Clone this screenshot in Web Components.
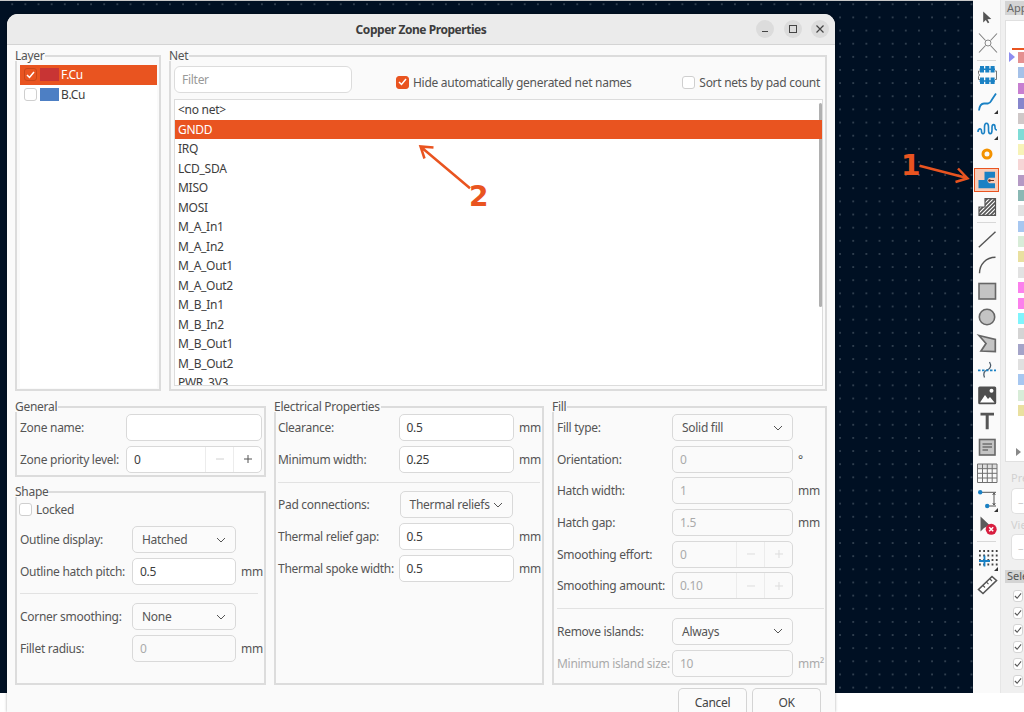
<!DOCTYPE html>
<html>
<head>
<meta charset="utf-8">
<title>Copper Zone Properties</title>
<style>
  html, body { margin: 0; height: 100%; overflow: hidden; background: #fff; }
  body { font: 12px "Noto Sans", sans-serif; letter-spacing: -0.28px; color: #3d3d3d; }
</style>
</head>
<body>
<pcb-editor>
  <tool-bar slot="tools"></tool-bar>
  <side-panel slot="panel"></side-panel>
  <zone-dialog slot="dialog"></zone-dialog>
  <call-out slot="dialog" num="1" nx="901" ny="149" d="M919.500 165.700L967 178M958 168.500L967.500 178.300L955.500 182"></call-out>
  <call-out slot="dialog" num="2" nx="469" ny="180" d="M470 188.300L421 147M433.500 147.500L420.500 146.500L424.500 158.500"></call-out>
</pcb-editor>

<script>
// small helper, every component goes through this
function shadow(el, html) {
  el.attachShadow({ mode: 'open' }).innerHTML = html;
}

const FIELD_CSS = `
  :host { display: block; }
  * { box-sizing: border-box; }
`;

class PcbEditor extends HTMLElement {
  constructor() {
    super();
    shadow(this, `
      <style>
        :host { display: block; position: relative; width: 1024px; height: 712px; overflow: hidden; background: #fff; }
        .top { display: flex; height: 693px; }
        .canvas {
          flex: 1;
          border-top: 1px solid #c8c8c8;
          background-color: #001023;
          background-image: radial-gradient(circle, #586673 0.5px, transparent 0.85px);
          background-size: 13.15px 13.15px;
          background-position: 5.67px -3.3px;
        }
      </style>
      <div class="top">
        <div class="canvas"></div>
        <slot name="tools"></slot>
        <slot name="panel"></slot>
      </div>
      <slot name="dialog"></slot>
    `);
  }
}

class ToolBar extends HTMLElement {
  constructor() {
    super();
    const blue = '#1a81c4';
    // mark = distance of the small corner triangle from the row bottom
    const icon = (size, body, mark) => `<div class="t" style="height:${size}px"><svg width="24" height="24" viewBox="0 0 24 24">${body}</svg>${mark !== undefined ? `<i style="bottom:${mark}px"></i>` : ''}</div>`;
    const zone = 'M4 20.300V12H10V3.700H20.500V20.300Z';
    shadow(this, `
      <style>
        :host { display: block; width: 28px; background: #fafafa; border-right: 1px solid #e6e6e6; padding-top: 3px; box-sizing: border-box; flex: none; }
        .t { position: relative; display: flex; align-items: center; justify-content: center; width: 27px; }
        .t svg { display: block; flex: none; }
        .t i { position: absolute; right: 2px; border: 2.5px solid transparent; border-right-color: #333; border-bottom-color: #333; }
        .sep { height: 1px; background: #d8d8d8; margin: 0 4px; }
        .on { background: #f9cdb9; box-shadow: inset 0 0 0 1px #e95420; width: 25px; margin-left: 1px; }
      </style>
      ${icon(26, `<path d="M8.200 7.500V18.500L10.800 16L12.800 19.300L14.300 18.400L12.500 15.200L16.300 15Z" fill="#555"/>`)}
      ${icon(28, `<path d="M4 2.500L10.500 9.500M22 2.500L15.500 9.500M4 21.500L10.500 14.500M22 21.500L15.500 14.500" stroke="#808080" stroke-width="1.100" fill="none"/><circle cx="13" cy="12" r="3" fill="none" stroke="#888"/>`)}
      <div class="sep" style="margin-top:3px"></div>
      ${icon(28, `<path d="M5 8H3.500V10.500L4.500 12L3.500 13.500V16.500H5M20 8H21.500V16.500H20" fill="none" stroke="#777"/><path d="M4.500 6.200H20M4.500 18H20" stroke="${blue}" stroke-width="1.500"/><path d="M5 3h4v6.500H5zM10.300 3h4v6.500h-4zM15.600 3h4v6.500h-4zM5 14.500h4V21H5zM10.300 14.500h4V21h-4zM15.600 14.500h4V21h-4z" fill="${blue}"/>`)}
      ${icon(28, `<path d="M4 19.500C4.500 15 6 12.500 9 12.500H13C15.500 12.500 16 10 17 8.500L21 2.500" fill="none" stroke="${blue}" stroke-width="1.800"/>`, 3)}
      ${icon(23, `<path d="M3 15C3 11 6.500 11 6.500 14C6.500 17.500 9.500 18 9.500 14V10C9.500 5 13.500 5 13.500 10V13C13.500 18 17 18 17 13V10.500C17 6.500 20 7 20 10C20 13 21 13 22 13" fill="none" stroke="${blue}" stroke-width="1.600"/>`, 0)}
      ${icon(28, `<circle cx="12" cy="12" r="4" fill="none" stroke="#f39200" stroke-width="3"/>`)}
      <div class="t on" style="height:24px"><svg width="25" height="24" viewBox="0 0 25 24"><path d="M4.500 20.300V12H10.500V3.700H21V20.300Z" fill="${blue}"/><path d="M21 9.800H15.500a2.800 2.800 0 0 0 0 5.400H21Z" fill="#f9cdb9"/><circle cx="15.500" cy="12.500" r="1.300" fill="#6b3020"/><path d="M15.500 12.500H20" stroke="#6b3020"/></svg></div>
      <div class="t" style="height:30px"><svg width="24" height="24" viewBox="0 0 24 24"><defs><clipPath id="hz"><path d="${zone}"/></clipPath></defs><path d="${zone}" fill="#fff"/><g clip-path="url(#hz)" stroke="#555" stroke-width="1.700"><path d="M0 8L8 0M0 12L12 0M0 16L16 0M0 20L20 0M0 24L24 0M4 24L24 4M8 24L24 8M12 24L24 12M16 24L24 16"/></g><path d="${zone}" fill="none" stroke="#555" stroke-width="1.200"/></svg></div>
      <div class="sep" style="margin-bottom:3px"></div>
      ${icon(26, `<path d="M3.800 20.300L20.500 4.700" stroke="#555" stroke-width="1.400"/>`)}
      ${icon(26, `<path d="M4.500 20.300C4.500 11 11 4.500 20.500 4.300" fill="none" stroke="#555" stroke-width="1.400"/>`)}
      ${icon(26, `<rect x="4" y="4.500" width="16.500" height="15.500" fill="#c4c4c4" stroke="#666" stroke-width="1.600"/>`)}
      ${icon(26, `<circle cx="12" cy="12" r="7.700" fill="#c4c4c4" stroke="#666" stroke-width="1.600"/>`)}
      ${icon(28, `<path d="M4 3.500L20.300 7.500V19.500L6 19L11 11.500Z" fill="#c4c4c4" stroke="#666" stroke-width="1.700"/>`)}
      ${icon(24, `<path d="M14.500 4C17 8 15 11 12 12C9 13 8 16 9.500 19.500" fill="none" stroke="#4a5a68" stroke-width="1.300"/><path d="M3 12.300H21" stroke="${blue}" stroke-width="1.700" stroke-dasharray="2.500 1.500"/>`)}
      ${icon(26, `<rect x="3.200" y="3.500" width="18" height="17.800" rx="1.500" fill="#4f4f4f"/><path d="M5 19.500L10 12L13 16L15 14L19.500 19.500Z" fill="#fff"/><circle cx="16.500" cy="7.800" r="2" fill="#fff"/>`)}
      ${icon(26, `<path d="M5.500 3.700H19V6.600H13.700V20.300H10.700V6.600H5.500Z" fill="#555"/>`)}
      ${icon(26, `<rect x="4.500" y="4.500" width="15.500" height="15.500" fill="#c4c4c4" stroke="#666" stroke-width="1.600"/><path d="M7.500 9H17M7.500 12H17M7.500 15H13" stroke="#444" stroke-width="1.200"/>`)}
      ${icon(26, `<rect x="2.500" y="3" width="19.500" height="4.700" fill="#ddd"/><path d="M2.500 3H22V21.500H2.500ZM2.500 7.700H22M2.500 12.300H22M2.500 17H22M7.500 3V21.500M12.300 3V21.500M17.200 3V21.500" fill="none" stroke="#707070"/>`)}
      ${icon(28, `<path d="M5 4.300H21M12 18H21M19 5V17M17.700 7L19 5L20.300 7M17.700 15L19 17L20.300 15" stroke="#555" fill="none"/><circle cx="5.200" cy="4.300" r="2.200" fill="${blue}"/><circle cx="12.200" cy="18" r="2.200" fill="${blue}"/>`, 2)}
      ${icon(24, `<path d="M5.500 2.500V17.500L9 14L11 13L15 11.500Z" fill="#5a5a5a"/><circle cx="16.200" cy="15.300" r="5.500" fill="#d81e3f"/><path d="M14.200 13.300L18.200 17.300M18.200 13.300L14.200 17.300" stroke="#fff" stroke-width="1.500"/>`)}
      <div class="sep" style="margin-top:3px"></div>
      ${icon(32, `<path d="M4 5H23M4 9.500H23M4 14H23M4 18.500H23" stroke="#444" stroke-width="1.800" stroke-dasharray="1.800 2.400" fill="none"/><path d="M9.500 9.500V20.500M4 15H15" stroke="${blue}" stroke-width="1.800"/>`, 3)}
      ${icon(20, `<path d="M3.500 17.500L17 4.500L21.500 8.500L8 21.500Z" fill="#fff" stroke="#555" stroke-width="1.600"/><path d="M8 13.500L10 15.500M11.500 10.200L13.500 12.200M15 7L17 9" stroke="#555" stroke-width="1.100"/>`)}
    `);
  }
}

class SidePanel extends HTMLElement {
  constructor() {
    super();
    const cols = ['#e49090','#a5c1e8','#c77fd0','#8686cc','#cfc8c8','#7fdcd6','#f7f3b8','#f6d6d6','#b49ac4','#8ab8b4','#e2e2e2','#a7c7f0','#d8ecd8','#e9e0a0','#e2e2e2','#fb80ec','#fb80ec','#80f4fc','#d4d4d4','#a4a4c8','#e0e0e0','#a7c7f0','#d8ecd8','#e9e0a0'];
    shadow(this, `
      <style>
        ${FIELD_CSS}
        :host { width: 23px; flex: none; background: #f0f0f0; overflow: hidden; font-size: 11px; color: #666; letter-spacing: 0; }
        .tab { background: #d4d4d4; margin: 1px 0 0 4px; height: 14px; line-height: 13px; padding-left: 2px; white-space: nowrap; }
        .layers { position: relative; height: 442px; margin: 5px 0 0 4px; background: #fff; border: 1px solid #e0e0e0; border-right: 0; overflow: hidden; }
        .line { height: 2px; width: 14px; margin: 27px 0 0 6px; background: #e95420; }
        .sw { display: flex; flex-direction: column; gap: 4.35px; margin: 2px 0 0 12px; }
        .sw b { display: block; width: 8px; height: 11px; flex: none; }
        .flag { position: absolute; left: 3px; top: 31px; border: 5px solid transparent; border-left: 6px solid #8e8ef0; border-right: 0; }
        .more { position: absolute; left: 10px; bottom: 5px; border: 4px solid transparent; border-left: 5px solid #888; border-right: 0; }
        .lbl { color: #d0d0d0; margin: 9px 0 0 10px; line-height: 14px; white-space: nowrap; }
        .box { height: 26px; margin: 3px 0 0 10px; background: #fff; border: 1px solid #e0e0e0; border-radius: 5px 0 0 5px; border-right: 0; color: #ccc; padding: 5px 0 0 6px; }
        .head { background: #d4d4d4; margin: 10px 0 0 4px; height: 13px; line-height: 12px; padding-left: 2px; white-space: nowrap; color: #555; }
        .cks { display: flex; flex-direction: column; gap: 5px; margin: 7px 0 0 12px; }
        .cks span { display: flex; align-items: center; justify-content: center; width: 10px; height: 12px; background: #fff; border: 1px solid #d4d4d4; border-radius: 3px; }
      </style>
      <div class="tab">App</div>
      <div class="layers">
        <div class="line"></div>
        <div class="flag"></div>
        <div class="sw">${cols.map(c => `<b style="background:${c}"></b>`).join('')}</div>
        <div class="more"></div>
      </div>
      <div class="lbl">Pre</div>
      <div class="box">–</div>
      <div class="lbl" style="margin-top:4px">Vie</div>
      <div class="box" style="margin-top:2px">–</div>
      <div class="head">Sele</div>
      <div class="cks">${Array(6).fill('<span><svg width="8" height="8" viewBox="0 0 9 8"><path d="M1 4l2.500 2.500L8 1" fill="none" stroke="#555" stroke-width="1.200"/></svg></span>').join('')}</div>
    `);
  }
}

class GroupBox extends HTMLElement {
  constructor() {
    super();
    shadow(this, `
      <style>
        ${FIELD_CSS}
        :host { min-width: 0; }
        fieldset { height: 100%; margin: 0; min-width: 0; padding: 0; border: 2px solid #dcdcdc; display: block; }
        legend { padding: 0 1px 0 0; margin: 0 0 0 -2px; font-size: 12px; line-height: 10px; color: #555; }
        .col { display: flex; flex-direction: column; height: 100%; padding: var(--pad, 2px 2px 0 3px); }
      </style>
      <fieldset>
        <legend>${this.getAttribute('label')}</legend>
        <div class="col"><slot></slot></div>
      </fieldset>
    `);
  }
}

class TextField extends HTMLElement {
  constructor() {
    super();
    const dis = this.hasAttribute('disabled');
    const spin = this.hasAttribute('spin');
    shadow(this, `
      <style>
        ${FIELD_CSS}
        :host { display: flex; height: 27px; background: ${dis ? '#fafafa' : '#fff'}; border: 1px solid #d9d9d9; border-radius: 5px; box-sizing: border-box; color: ${dis ? '#aaa' : '#3d3d3d'}; }
        .v { flex: 1; padding-left: 7px; line-height: 26px; min-width: 0; }
        .b { width: 28px; border-left: 1px solid #ececec; display: flex; align-items: center; justify-content: center; }
        svg { display: block; }
      </style>
      <div class="v"><slot></slot></div>
      ${spin ? `<div class="b"><svg width="10" height="10"><path d="M1 5h8" stroke="${dis ? '#ddd' : '#d0d0d0'}"/></svg></div>
      <div class="b"><svg width="10" height="10"><path d="M1 5h8M5 1v8" stroke="${dis ? '#ddd' : '#555'}"/></svg></div>` : ''}
    `);
  }
}

class SelectBox extends HTMLElement {
  constructor() {
    super();
    shadow(this, `
      <style>
        :host { display: flex; align-items: center; height: 27px; box-sizing: border-box; background: #fbfbfb; border: 1px solid #d9d9d9; border-radius: 5px; padding: 0 9px; color: #555; }
        .v { flex: 1; white-space: nowrap; }
        svg { display: block; }
      </style>
      <div class="v"><slot></slot></div>
      <svg width="10" height="6" viewBox="0 0 10 6"><path d="M1 1l4 4 4-4" fill="none" stroke="#555" stroke-width="1"/></svg>
    `);
  }
}

class CheckBox extends HTMLElement {
  constructor() {
    super();
    const on = this.hasAttribute('checked');
    shadow(this, `
      <style>
        :host { display: inline-flex; align-items: center; gap: 4px; color: #555; white-space: nowrap; }
        .b { width: 13px; height: 13px; box-sizing: border-box; border-radius: 3px; border: 1px solid ${on ? '#e95420' : '#cfcfcf'}; background: ${on ? '#e95420' : '#fff'}; display: flex; align-items: center; justify-content: center; }
        svg { display: block; }
      </style>
      <div class="b">${on ? '<svg width="9" height="8" viewBox="0 0 9 8"><path d="M1 4l2.500 2.500L8 1" fill="none" stroke="#fff" stroke-width="1.500"/></svg>' : ''}</div>
      <slot></slot>
    `);
  }
}

// one row of a property group: label, control, unit
class PropRow extends HTMLElement {
  constructor() {
    super();
    const faint = this.hasAttribute('faint');
    shadow(this, `
      <style>
        :host { display: grid; grid-template-columns: var(--lab) var(--ctl) 1fr; align-items: center; height: 27px; flex: none; margin-bottom: 4.67px; color: ${faint ? '#aaa' : '#555'}; white-space: nowrap; }
        .u { padding-left: 5px; }
      </style>
      <div><slot name="label"></slot></div>
      <slot></slot>
      <div class="u"><slot name="unit"></slot></div>
    `);
  }
}

class HLine extends HTMLElement {
  constructor() {
    super();
    shadow(this, `<style>:host { display: block; flex: none; height: 1px; background: #e2e2e2; margin: var(--hr, 4.500px 0 8.500px); }</style>`);
  }
}

class LayerList extends HTMLElement {
  constructor() {
    super();
    shadow(this, `
      <style>
        :host { display: block; flex: 1; background: #fff; }
        .r { display: flex; align-items: center; height: 19.5px; padding-left: 4px; color: #3d3d3d; }
        .r.s { background: #e95420; color: #fff; }
        .c { width: 13px; height: 13px; box-sizing: border-box; border: 1px solid #cfcfcf; background: #fff; border-radius: 3px; margin-right: 3px; display: flex; align-items: center; justify-content: center; }
        .s .c { background: #e95420; border-color: #c9471a; }
        .k { width: 19px; height: 13px; margin-right: 2px; }
        svg { display: block; }
      </style>
      <div class="r s"><div class="c"><svg width="9" height="8" viewBox="0 0 9 8"><path d="M1 4l2.500 2.500L8 1" fill="none" stroke="#fff" stroke-width="1.500"/></svg></div><div class="k" style="background:#c83434"></div>F.Cu</div>
      <div class="r"><div class="c"></div><div class="k" style="background:#4d7fc4"></div>B.Cu</div>
    `);
  }
}

class NetList extends HTMLElement {
  constructor() {
    super();
    const nets = ['<no net>','GNDD','IRQ','LCD_SDA','MISO','MOSI','M_A_In1','M_A_In2','M_A_Out1','M_A_Out2','M_B_In1','M_B_In2','M_B_Out1','M_B_Out2','PWR_3V3'];
    const esc = s => s.replace(/</g, '&lt;').replace(/>/g, '&gt;');
    shadow(this, `
      <style>
        :host { display: block; position: relative; height: 287px; width: 649px; flex: none; box-sizing: border-box; background: #fff; border: 1px solid #dcdcdc; overflow: hidden; color: #3d3d3d; }
        .r { height: 19.5px; line-height: 19px; padding-left: 3px; }
        .s { position: relative; z-index: 1; background: #e95420; color: #fff; }
        .bar { position: absolute; right: 0; top: 3px; width: 3px; height: 204px; background: #b0b0b0; border-radius: 2px; }
      </style>
      ${nets.map(n => `<div class="r${n === 'GNDD' ? ' s' : ''}">${esc(n)}</div>`).join('')}
      <div class="bar"></div>
    `);
  }
}

class DialogButton extends HTMLElement {
  constructor() {
    super();
    shadow(this, `
      <style>
        :host { display: flex; align-items: center; justify-content: center; width: 69px; height: 30px; box-sizing: border-box; background: #fbfbfb; border: 1px solid #d4d4d4; border-bottom: 0; border-radius: 5px 5px 0 0; padding-bottom: 2px; color: #444; }
      </style>
      <slot></slot>
    `);
  }
}

// the orange number + arrow drawn on top of the screenshot
class CallOut extends HTMLElement {
  constructor() {
    super();
    const x = this.getAttribute('nx'), y = this.getAttribute('ny');
    shadow(this, `
      <style>
        :host { position: absolute; left: 0; top: 0; width: 1024px; height: 712px; pointer-events: none; }
        svg { position: absolute; left: 0; top: 0; }
        span { position: absolute; font: 700 28px/34px "DejaVu Sans", sans-serif; letter-spacing: 0; color: #e95420; }
      </style>
      <svg width="1024" height="712"><path d="${this.getAttribute('d')}" fill="none" stroke="#e95420" stroke-width="2.500"/></svg>
      <span style="left:${x}px;top:${y}px">${this.getAttribute('num')}</span>
    `);
  }
}

class ZoneDialog extends HTMLElement {
  constructor() {
    super();
    shadow(this, `
      <style>
        ${FIELD_CSS}
        :host { position: absolute; left: 7px; top: 14px; width: 828px; height: 698px; background: #fafafa; border-radius: 11px 11px 0 0; overflow: hidden; font-size: 12px; color: #555; box-shadow: 0 0 3px rgba(0,0,0,.35); }
        .title { display: flex; align-items: center; justify-content: center; position: relative; height: 31px; background: #ebebeb; border-bottom: 1px solid #d4d4d4; font-weight: 700; color: #3d3d3d; letter-spacing: -0.45px; }
        .wc { position: absolute; right: 6px; top: 6px; display: flex; gap: 9.500px; }
        .wc span { width: 18px; height: 18px; border-radius: 50%; background: #dcdcdc; display: flex; align-items: center; justify-content: center; }
        .wc svg { display: block; }
        .body { padding: 6px 8px 0 8px; }
        .top { display: grid; grid-template-columns: 146px 658px; gap: 8px; height: 340px; }
        .filter-row { display: flex; align-items: center; height: 27px; flex: none; margin: 5px 0 6px 0; }
        .filter { width: 178px; height: 27px; background: #fff; border: 1px solid #dcdcdc; border-radius: 6px; color: #999; line-height: 25px; padding-left: 7px; }
        .hide { margin: 5px 0 0 44px; }
        .sort { margin: 5px 3px 0 auto; }
        .bottom { display: grid; grid-template-columns: 251px 270px 275px; gap: 8px; margin-top: 11px; height: 283px; }
        .stack { display: flex; flex-direction: column; gap: 10px; }
        .general { height: 75px; flex: none; --lab: 106px; --ctl: 136px; }
        .shape { flex: 1; --lab: 112px; --ctl: 104px; --pad: 0 6px 0 3px; --hr: 3.500px 0 9.500px; }
        .locked { height: 14px; margin: 5px 0 10px -1px; flex: none; }
        .elec { --lab: 120.500px; --ctl: 115.500px; --pad: 2px 2px 0 2px; }
        .fill { --lab: 115px; --ctl: 121px; --pad: 2px 1.500px 0 3px; }
        .actions { display: flex; justify-content: flex-end; gap: 5px; padding: 3px 6px 0 0; }
        .elec select-box { width: 113px; margin-left: 1px; }
      </style>
      <div class="title">Copper Zone Properties
        <div class="wc">
          <span><svg width="10" height="10"><path d="M2 7.500h6" stroke="#444" stroke-width="1.200"/></svg></span>
          <span><svg width="10" height="10"><rect x="1.500" y="1.500" width="7" height="7" fill="none" stroke="#444"/></svg></span>
          <span><svg width="10" height="10"><path d="M1.500 1.500l7 7M8.500 1.500l-7 7" stroke="#444" stroke-width="1.200"/></svg></span>
        </div>
      </div>
      <div class="body">
        <div class="top">
          <group-box label="Layer" style="--pad:4px 2px 1px 3px"><layer-list></layer-list></group-box>
          <group-box label="Net" style="--pad:0 2px 0 3px">
            <div class="filter-row">
              <div class="filter">Filter</div>
              <check-box class="hide" checked>Hide automatically generated net names</check-box>
              <check-box class="sort">Sort nets by pad count</check-box>
            </div>
            <net-list></net-list>
          </group-box>
        </div>
        <div class="bottom">
          <div class="stack">
            <group-box label="General" class="general">
              <prop-row><span slot="label">Zone name:</span><text-field></text-field></prop-row>
              <prop-row style="margin:0"><span slot="label">Zone priority level:</span><text-field spin>0</text-field></prop-row>
            </group-box>
            <group-box label="Shape" class="shape">
              <check-box class="locked">Locked</check-box>
              <prop-row><span slot="label">Outline display:</span><select-box>Hatched</select-box></prop-row>
              <prop-row><span slot="label">Outline hatch pitch:</span><text-field>0.5</text-field><span slot="unit">mm</span></prop-row>
              <h-line></h-line>
              <prop-row><span slot="label">Corner smoothing:</span><select-box>None</select-box></prop-row>
              <prop-row><span slot="label">Fillet radius:</span><text-field disabled>0</text-field><span slot="unit">mm</span></prop-row>
            </group-box>
          </div>
          <group-box label="Electrical Properties" class="elec">
            <prop-row><span slot="label">Clearance:</span><text-field>0.5</text-field><span slot="unit">mm</span></prop-row>
            <prop-row><span slot="label">Minimum width:</span><text-field>0.25</text-field><span slot="unit">mm</span></prop-row>
            <h-line></h-line>
            <prop-row><span slot="label">Pad connections:</span><select-box>Thermal reliefs</select-box></prop-row>
            <prop-row><span slot="label">Thermal relief gap:</span><text-field>0.5</text-field><span slot="unit">mm</span></prop-row>
            <prop-row><span slot="label">Thermal spoke width:</span><text-field>0.5</text-field><span slot="unit">mm</span></prop-row>
          </group-box>
          <group-box label="Fill" class="fill">
            <prop-row><span slot="label">Fill type:</span><select-box>Solid fill</select-box></prop-row>
            <prop-row><span slot="label">Orientation:</span><text-field disabled>0</text-field><span slot="unit">°</span></prop-row>
            <prop-row><span slot="label">Hatch width:</span><text-field disabled>1</text-field><span slot="unit">mm</span></prop-row>
            <prop-row><span slot="label">Hatch gap:</span><text-field disabled>1.5</text-field><span slot="unit">mm</span></prop-row>
            <prop-row><span slot="label">Smoothing effort:</span><text-field disabled spin>0</text-field></prop-row>
            <prop-row><span slot="label">Smoothing amount:</span><text-field disabled spin>0.10</text-field></prop-row>
            <h-line></h-line>
            <prop-row><span slot="label">Remove islands:</span><select-box>Always</select-box></prop-row>
            <prop-row faint style="margin:0"><span slot="label">Minimum island size:</span><text-field disabled>10</text-field><span slot="unit">mm²</span></prop-row>
          </group-box>
        </div>
        <div class="actions">
          <dialog-button>Cancel</dialog-button>
          <dialog-button>OK</dialog-button>
        </div>
      </div>
    `);
  }
}

customElements.define('pcb-editor', PcbEditor);
customElements.define('tool-bar', ToolBar);
customElements.define('side-panel', SidePanel);
customElements.define('group-box', GroupBox);
customElements.define('text-field', TextField);
customElements.define('select-box', SelectBox);
customElements.define('check-box', CheckBox);
customElements.define('prop-row', PropRow);
customElements.define('h-line', HLine);
customElements.define('layer-list', LayerList);
customElements.define('net-list', NetList);
customElements.define('dialog-button', DialogButton);
customElements.define('call-out', CallOut);
customElements.define('zone-dialog', ZoneDialog);
</script>
</body>
</html>
